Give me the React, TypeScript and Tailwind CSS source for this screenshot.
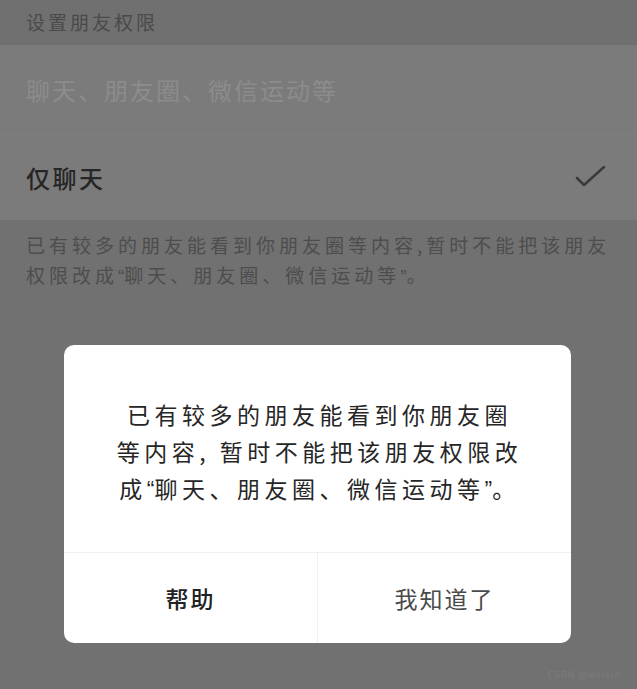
import React from "react";

const font = { fontFamily: '"Noto Sans CJK SC", "Noto Sans", sans-serif' };

// narrow Latin-style curly quotes, as in the screenshot
function Q({ children }: { children: React.ReactNode }) {
  return <span className="font-['Liberation_Sans',sans-serif] tracking-normal">{children}</span>;
}

export default function App() {
  return (
    <div className="relative h-[689px] w-full overflow-hidden bg-[#717171]" style={font}>
      {/* section title */}
      <div className="flex h-[45px] items-center bg-[#707070] px-[26px] text-[19px] tracking-[3px] text-[#4a4a4a]">
        设置朋友权限
      </div>

      {/* options list */}
      <div className="bg-[#7b7b7b]">
        <div className="flex h-[90px] items-center border-b border-[#7f7f7f] px-[26px] text-[24px] tracking-[2px] text-[#8c8c8c]">
          聊天、朋友圈、微信运动等
        </div>
        <div className="flex h-[85px] items-center justify-between pl-[26px] pr-[30px]">
          <span className="text-[24px] font-medium tracking-[2.5px] text-[#262626]">仅聊天</span>
          <svg width="32" height="24" viewBox="0 0 32 24" fill="none">
            <polyline
              points="2,12 9,19 29,1"
              stroke="#3a3a3a"
              strokeWidth="2.5"
              strokeLinecap="round"
              strokeLinejoin="round"
            />
          </svg>
        </div>
      </div>

      {/* hint */}
      <p className="whitespace-nowrap px-[26px] pt-[10px] text-[19px] leading-[30px] tracking-[4px] text-[#4d4d4d]">
        已有较多的朋友能看到你朋友圈等内容,暂时不能把该朋友
        <br />
        权限改成<Q>“</Q>聊天、朋友圈、微信运动等<Q>”</Q>。
      </p>

      {/* dialog */}
      <div className="absolute left-[64px] top-[345px] flex h-[298px] w-[507px] flex-col overflow-hidden rounded-[10px] bg-white">
        <p className="flex-1 whitespace-nowrap pl-[4px] pt-[51px] text-center text-[23px] leading-[37px] tracking-[4.5px] text-[#262626]">
          已有较多的朋友能看到你朋友圈
          <br />
          等内容, 暂时不能把该朋友权限改
          <br />
          成<Q>“</Q>聊天、朋友圈、微信运动等<Q>”</Q>。
        </p>
        <div className="flex h-[91px] border-t border-[#efefef]">
          <button className="flex flex-1 items-center justify-center border-r border-[#efefef] text-[23px] font-medium tracking-[2px] text-[#222222]">
            帮助
          </button>
          <button className="flex flex-1 items-center justify-center text-[23px] tracking-[2px] text-[#4a4a4a]">
            我知道了
          </button>
        </div>
      </div>

      <div className="absolute bottom-[8px] right-[16px] text-[9px] tracking-[1px] text-[#7c7c7c]">
        CSDN @weixin
      </div>
    </div>
  );
}
